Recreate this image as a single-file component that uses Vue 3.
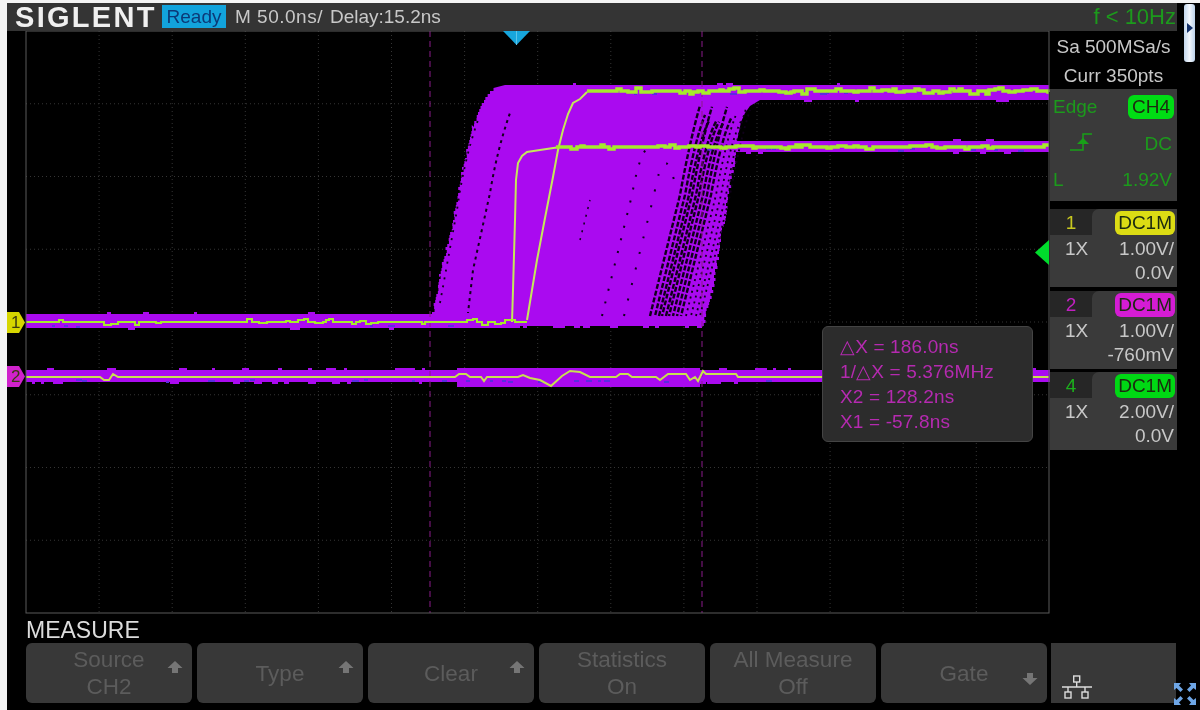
<template>
  <div class="scope">
    <div class="topbar">
      <span class="logo">SIGLENT</span>
      <span class="ready">Ready</span>
      <span class="timebase">M 50.0ns/</span>
      <span class="delay">Delay:15.2ns</span>
      <span class="freq">f &lt; 10Hz</span>
    </div>

    <div class="main">
      <div class="plot">
        <svg class="wave" viewBox="7 31 1043 583" width="1043" height="583">
          <!-- grid -->
          <line v-for="x in gridX" :key="'gx' + x" :x1="x" :x2="x" y1="31" y2="613" class="grid" />
          <line v-for="y in gridY" :key="'gy' + y" x1="26" x2="1049" :y1="y" :y2="y" class="grid" />

          <!-- persistence area -->
          <polygon :points="blob" fill="#aa0af0" />
          <rect x="26" y="314" width="420" height="14" fill="#aa0af0" />
          <rect x="26" y="370" width="1024" height="12" fill="#aa0af0" />
          <rect x="457" y="368" width="243" height="19" fill="#aa0af0" />
          <rect v-for="(b, i) in bumps" :key="'b' + i" :x="b.x" :y="b.y" :width="b.w" :height="b.h" fill="#aa0af0" />
          <rect v-for="(b, i) in bluePixels" :key="'p' + i" :x="b.x" :y="b.y" :width="b.w" height="2" fill="#5a2ce0" />

          <!-- missed points in the persistence -->
          <path v-for="(s, i) in speckles" :key="'s' + i" :d="s.d" fill="none" stroke="#10001a"
            :stroke-width="s.w" :stroke-dasharray="s.dash" :stroke-dashoffset="s.off" />

          <!-- cursors -->
          <line x1="430" x2="430" y1="31" y2="613" class="cursor" />
          <line x1="702" x2="702" y1="31" y2="613" class="cursor" />

          <!-- captured traces -->
          <polyline :points="riseTop" class="trace rise" />
          <polyline :points="riseMid" class="trace rise" />
          <polyline :points="flatTop" class="trace thick" />
          <polyline :points="flatMid" class="trace thick" />
          <polyline :points="flatLeft" class="trace" />
          <polyline :points="traceLow" class="trace pale" />
          <polyline :points="traceRef" class="trace pale" />

          <rect x="26" y="31" width="1023" height="582" class="frame" />

          <!-- trigger position and level -->
          <polygon points="503,31 530,31 516.5,45" fill="#17a6dd" />
          <line x1="516.5" x2="516.5" y1="31" y2="45" stroke="#5cc4ea" />
          <polygon points="1049,240 1049,265 1035,252.5" fill="#00dc2c" />

          <!-- channel markers -->
          <polygon points="7,312 19,312 25,322.5 19,333 7,333" fill="#d6d600" />
          <text x="11" y="328" class="marker">1</text>
          <polygon points="7,366 19,366 25,376.5 19,387 7,387" fill="#d022cc" />
          <text x="11" y="382" class="marker">2</text>
        </svg>

        <div class="readout">
          <div>△X = 186.0ns</div>
          <div>1/△X = 5.376MHz</div>
          <div>X2 = 128.2ns</div>
          <div>X1 = -57.8ns</div>
        </div>
      </div>

      <div class="side">
        <div class="acq">
          <div>Sa 500MSa/s</div>
          <div>Curr 350pts</div>
        </div>

        <div class="trig">
          <div class="trig-row">
            <span>Edge</span>
            <span class="pill green">CH4</span>
          </div>
          <div class="trig-row">
            <svg class="edge" width="24" height="20" viewBox="0 0 24 20">
              <path d="M1 18H14V2H23" fill="none" stroke="#18a018" stroke-width="1.5" />
              <polygon points="14,6 20,12 8,12" fill="#18a018" />
            </svg>
            <span class="trig-val">DC</span>
          </div>
          <div class="trig-row">
            <span>L</span>
            <span class="trig-val">1.92V</span>
          </div>
        </div>

        <div v-for="ch in channels" :key="ch.id" class="chan" :class="'c' + ch.id">
          <div class="chan-head">
            <span class="chan-tab">{{ ch.id }}</span>
            <span class="chan-right"><span class="pill">DC1M</span></span>
          </div>
          <div class="chan-body">
            <span class="probe">1X</span>
            <span class="scale">{{ ch.scale }}<br />{{ ch.offset }}</span>
          </div>
        </div>
      </div>
    </div>

    <div class="menu-title">MEASURE</div>
    <div class="keys">
      <div v-for="k in keys" :key="k.label" class="key">
        <span>{{ k.label }}</span>
        <span v-if="k.sub">{{ k.sub }}</span>
        <svg v-if="k.arrow" class="arrow" :class="k.arrow" width="16" height="14" viewBox="0 0 16 14">
          <path d="M8 1L15.5 8H11V13H5V8H.5Z" fill="#757575" />
        </svg>
      </div>
      <div class="key-net">
        <svg width="32" height="26" viewBox="0 0 32 26" fill="none" stroke="#dcdcdc" stroke-width="1.4">
          <rect x="12.7" y="1" width="6" height="6" />
          <path d="M15.7 7V12M1 12H31M7 12V17M24 12V17" />
          <rect x="4" y="17" width="6" height="6" />
          <rect x="21" y="17" width="6" height="6" />
        </svg>
      </div>
    </div>

    <!-- scroll handle and fullscreen, belong to the viewer not the scope -->
    <div class="handle"></div>
    <svg class="fullscreen" width="24" height="24" viewBox="0 0 24 24" fill="#6ea6e6">
      <path d="M1 1H8L6 3.500L10 7.500L7.500 10L3.500 6L1 8Z" />
      <path d="M23 1H16L18 3.500L14 7.500L16.500 10L20.500 6L23 8Z" />
      <path d="M1 23H8L6 20.500L10 16.500L7.500 14L3.500 18L1 16Z" />
      <path d="M23 23H16L18 20.500L14 16.500L16.500 14L20.500 18L23 16Z" />
    </svg>
  </div>
</template>

<script setup>
// small seeded random so the noise is the same on every load
let seed = 7
const rnd = () => {
  seed = (seed * 16807) % 2147483647
  return seed / 2147483647
}

const gridX = Array.from({ length: 13 }, (_, i) => 26 + 73.1 * (i + 1))
const gridY = Array.from({ length: 7 }, (_, i) => 31 + 72.75 * (i + 1))

// walk along an edge in 3px rows, with a pixel of jitter, to get the stair look
const jagged = (knots) => {
  const out = []
  for (let k = 0; k < knots.length - 1; k++) {
    const [x0, y0] = knots[k]
    const [x1, y1] = knots[k + 1]
    const dir = y1 < y0 ? -1 : 1
    for (let y = y0; dir * (y1 - y) > 0; y += dir * 3) {
      const x = x0 + ((y - y0) / (y1 - y0)) * (x1 - x0) + Math.round(rnd() * 2 - 1)
      out.push([x, y], [x, y + dir * 3])
    }
  }
  return out
}

const blob = [
  ...jagged([[433, 315], [440, 277], [453, 223], [463, 170], [473, 127], [483, 103], [490, 94], [497, 88]]),
  [505, 85], [1049, 85], [1049, 100], [760, 100], [750, 106], [745, 113], [741, 122], [737, 141],
  [1049, 141], [1049, 152],
  ...jagged([[736, 152], [727, 203], [720, 245], [713, 287], [703, 326]]),
  [520, 326], [520, 328], [433, 328],
].map((p) => p.join(',')).join(' ')

// little blocks poking out of the flat parts of the bands
const bumps = []
const addBumps = (from, to, top, bottom, chance) => {
  for (let x = from; x < to; x += 3) {
    if (rnd() < chance) bumps.push({ x, y: top, w: 3 + Math.floor(rnd() * 6), h: 2 })
    if (rnd() < chance) bumps.push({ x, y: bottom, w: 3 + Math.floor(rnd() * 6), h: 2 })
  }
}
addBumps(26, 430, 312, 328, 0.03)
addBumps(26, 1045, 368, 382, 0.1)
addBumps(510, 1045, 83, 100, 0.03)
addBumps(740, 1045, 139, 152, 0.04)
addBumps(520, 700, 326, 326, 0.08)

const bluePixels = []
for (const y of [92, 148, 324, 379]) {
  for (let x = 40; x < 1040; x += 6) {
    if (rnd() < 0.12 && !(y < 200 && x < 600) && !(y === 324 && x > 500)) {
      bluePixels.push({ x, y: y + Math.round(rnd() * 2), w: 3 + Math.floor(rnd() * 5) })
    }
  }
}

const speckles = []
const slanted = (x, topY, dash, w = 2) => {
  const d = `M${x} 316 L${x + 30} 195 Q${x + 40} 140 ${x + 50} ${topY}`
  speckles.push({ d, dash, w, off: Math.floor(rnd() * 8) })
}
// dense group on the late side of the edge
for (const x of [650, 655, 659, 662, 666, 669, 673, 677, 681]) slanted(x, 105 + rnd() * 20, '5 2', 2.4)
for (const x of [686, 691, 696, 700]) slanted(x, 108 + rnd() * 15, '2 4', 1.8)
// a few sparse ones in the middle and on the early side
slanted(602, 150, '2 11')
slanted(624, 180, '2 14')
speckles.push({ d: 'M440 303 L457 210 Q464 160 478 120', dash: '2 6', w: 1.8, off: 0 })
speckles.push({ d: 'M468 313 L473 270 L490 193 Q497 150 510 113', dash: '3 4', w: 2, off: 2 })
speckles.push({ d: 'M580 240 L590 200', dash: '2 6', w: 1.5, off: 0 })

// stepped noise, y jumps by whole pixels between short flat runs
const ripple = (from, to, y, amp, chance) => {
  const pts = []
  let x = from
  let cur = y
  while (x < to) {
    pts.push([x, cur])
    x = Math.min(to, x + 3 + Math.floor(rnd() * 6))
    pts.push([x, cur])
    cur = rnd() < chance ? y - Math.round(rnd() * amp * 2 - amp) : y
  }
  return pts
}
const toPoints = (pts) => pts.map((p) => p.join(',')).join(' ')

const flatLeft = toPoints(ripple(26, 527, 322, 3, 0.3))
const riseTop = toPoints([
  [527, 320], [532, 290], [537, 260], [545, 218], [553, 177], [558, 150], [563, 130], [568, 114], [573, 103],
  [580, 99], [587, 92],
])
const flatTop = toPoints(ripple(587, 1049, 91, 3, 0.55))
const riseMid = toPoints([
  [512, 322], [513, 290], [515, 220], [516, 180], [518, 163], [522, 156], [527, 152], [540, 150], [560, 147],
])
const flatMid = toPoints(ripple(556, 1049, 147, 2, 0.55))

const traceLow = toPoints([
  [26, 377], [100, 377], [104, 380], [109, 380], [113, 374], [118, 377], [455, 377], [459, 374], [466, 374], [470, 377],
  [481, 377], [484, 381], [487, 377], [518, 377], [523, 375], [530, 378], [540, 380], [551, 386], [562, 376], [570, 371],
  [580, 372], [590, 377], [616, 377], [620, 374], [628, 374], [632, 377], [656, 377], [660, 380], [668, 374], [686, 374],
  [690, 380], [695, 377], [698, 381], [703, 371], [706, 374], [736, 374], [738, 377], [822, 377],
])
const traceRef = toPoints([[1033, 377], [1049, 377]])

const channels = [
  { id: 1, scale: '1.00V/', offset: '0.0V' },
  { id: 2, scale: '1.00V/', offset: '-760mV' },
  { id: 4, scale: '2.00V/', offset: '0.0V' },
]

const keys = [
  { label: 'Source', sub: 'CH2', arrow: 'up' },
  { label: 'Type', arrow: 'up' },
  { label: 'Clear', arrow: 'up' },
  { label: 'Statistics', sub: 'On' },
  { label: 'All Measure', sub: 'Off' },
  { label: 'Gate', arrow: 'down' },
]
</script>

<style>
html,
body {
  margin: 0;
  background: #000;
}
</style>

<style scoped>
.scope {
  position: relative;
  box-sizing: border-box;
  width: 1200px;
  height: 710px;
  overflow: hidden;
  background: #000;
  border-top: 3px solid #f4f4f4;
  border-left: 7px solid #f4f4f4;
  font-family: "Liberation Sans", Arial, sans-serif;
  color: #c8c8c8;
  filter: blur(0.5px);
}

.topbar {
  display: flex;
  align-items: center;
  width: 1170px;
  height: 28px;
  background: #343434;
  font-size: 19px;
  white-space: nowrap;
}

.logo {
  width: 155px;
  padding-left: 8px;
  box-sizing: border-box;
  font-size: 29px;
  font-weight: bold;
  letter-spacing: 2.3px;
  color: #f0f0f0;
}

.ready {
  width: 64px;
  height: 23px;
  margin-top: -1px;
  background: #12a3dc;
  color: #0b3a78;
  text-align: center;
  line-height: 24px;
}

.timebase {
  margin-left: 9px;
  letter-spacing: 0.5px;
}

.delay {
  margin-left: 7px;
}

.freq {
  margin-left: auto;
  padding-right: 1px;
  font-size: 22px;
  color: #1c9a1c;
}

.main {
  display: flex;
  height: 583px;
}

.plot {
  position: relative;
  width: 1043px;
  height: 583px;
}

.wave {
  display: block;
}

.grid {
  stroke: #353535;
  stroke-width: 1;
  stroke-dasharray: 1 3;
}

.cursor {
  stroke: #8a1a8a;
  stroke-width: 1;
  stroke-dasharray: 6 4;
}

.trace {
  fill: none;
  stroke: #a6ea2c;
  stroke-width: 2;
}

.trace.thick {
  stroke-width: 3.5;
}

.trace.rise {
  stroke: #c4e85a;
  stroke-width: 2;
}

.trace.pale {
  stroke: #c8e050;
}

.frame {
  fill: none;
  stroke: #5a5a5a;
  stroke-width: 1;
}

.marker {
  font-size: 17px;
  fill: #3a3a10;
}

.readout {
  position: absolute;
  left: 815px;
  top: 295px;
  box-sizing: border-box;
  width: 211px;
  height: 116px;
  padding: 7px 0 0 17px;
  background: #2c2c2c;
  border: 1px solid #444;
  border-radius: 6px;
  color: #b52ab0;
  font-size: 19px;
  line-height: 25px;
  letter-spacing: 0.15px;
}

.side {
  width: 127px;
  font-size: 19px;
}

.acq {
  height: 58px;
  text-align: center;
  font-size: 19px;
  line-height: 29px;
  padding-top: 1px;
  box-sizing: border-box;
}

.trig {
  display: flex;
  flex-direction: column;
  justify-content: space-between;
  box-sizing: border-box;
  height: 112px;
  padding: 5px 3px 8px 3px;
  background: #3a3a3a;
  color: #1c9a1c;
}

.trig-row {
  display: flex;
  align-items: center;
  justify-content: space-between;
  height: 26px;
}

.trig-val {
  margin-right: 2px;
}

.edge {
  margin-left: 16px;
  margin-top: -4px;
}

.pill {
  display: inline-block;
  height: 24px;
  padding: 0 3px;
  border-radius: 6px;
  line-height: 24px;
  color: #1c2a10;
}

.pill.green {
  background: #00dc14;
  width: 40px;
  text-align: center;
}

.chan {
  height: 78px;
  margin-top: 3px;
  background: #3a3a3a;
}

.c1 {
  margin-top: 8px;
}

.c2 {
  margin-top: 4px;
}

.chan-head {
  display: flex;
  height: 26px;
  background: #262626;
}

.chan-tab {
  width: 42px;
  text-align: center;
  line-height: 28px;
}

.chan-right {
  flex: 1;
  display: flex;
  justify-content: flex-end;
  align-items: flex-end;
  padding-right: 2px;
  background: #3a3a3a;
  border-top-left-radius: 7px;
}

.c1 .chan-tab {
  color: #c8c820;
}

.c2 .chan-tab {
  color: #c020c0;
}

.c4 .chan-tab {
  color: #1cb01c;
}

.c1 .pill {
  background: #dcdc14;
}

.c2 .pill {
  background: #d41cd4;
}

.c4 .pill {
  background: #00d814;
}

.chan-body {
  display: flex;
  justify-content: space-between;
  padding: 0 3px 0 15px;
  line-height: 24px;
  font-size: 19px;
}

.scale {
  text-align: right;
  padding-top: 2px;
}

.probe {
  padding-top: 2px;
}

.menu-title {
  height: 29px;
  padding-left: 19px;
  box-sizing: border-box;
  font-size: 23px;
  line-height: 33px;
  color: #dcdcdc;
}

.keys {
  display: flex;
  gap: 5px;
  padding-left: 19px;
  height: 60px;
}

.key {
  position: relative;
  display: flex;
  flex-direction: column;
  align-items: center;
  justify-content: center;
  width: 166px;
  background: #383838;
  border-radius: 6px;
  color: #5c5c5c;
  font-size: 22.5px;
  line-height: 27px;
}

.arrow {
  position: absolute;
  right: 9px;
}

.arrow.up {
  top: 17px;
}

.arrow.down {
  top: 29px;
  transform: scaleY(-1);
}

.key-net {
  display: flex;
  align-items: flex-end;
  flex: 0 0 125px;
  margin-left: -1px;
  padding: 0 0 2px 10px;
  box-sizing: border-box;
  background: #383838;
}

.handle {
  position: absolute;
  left: 1177px;
  top: 1px;
  width: 11px;
  height: 58px;
  border-radius: 3px;
  background: linear-gradient(90deg, #c4d8ee, #f2f7fd 50%, #bcd2ea);
}

.handle::after {
  content: "";
  position: absolute;
  left: 3px;
  top: 19px;
  border-left: 6px solid #12306a;
  border-top: 5px solid transparent;
  border-bottom: 5px solid transparent;
}

.fullscreen {
  position: absolute;
  left: 1166px;
  top: 679px;
}
</style>
